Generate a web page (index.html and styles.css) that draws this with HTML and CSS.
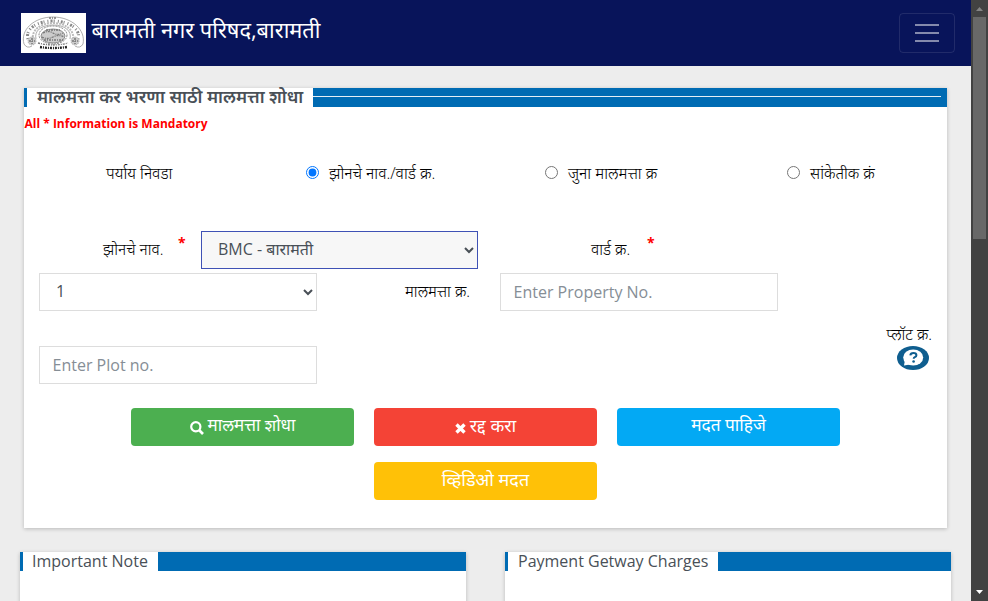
FILE: index.html
```html
<!DOCTYPE html>
<html lang="mr">
<head>
<meta charset="utf-8">
<title>बारामती नगर परिषद</title>
<link rel="stylesheet" href="styles.css">
</head>
<body>
<div class="page">
  <header class="navbar">
    <svg class="logo" viewBox="0 0 65 40">
      <rect width="65" height="40" fill="#fff"/>
      <g fill="none" stroke="#999" stroke-width=".8">
        <path d="M3 31C-1 17 13 4 32 4s33 13 30 27q-3 5-8 2M3 31q3 5 8 2M15 26C13 18 20 12 32 12s19 6 17 14"/>
        <path d="M7 26C4 16 16 8 32 8s28 8 25 18" stroke="#888" stroke-width="3" stroke-dasharray="1 2 2 1 1 3"/>
        <path d="M12 27C10 17 20 10 32 10s22 7 20 17" stroke="#bbb" stroke-width="2" stroke-dasharray="2 1"/>
        <ellipse cx="32" cy="22" rx="14" ry="9" stroke="#666" stroke-dasharray="2 1"/>
        <ellipse cx="32" cy="23" rx="12" ry="7" fill="#ccc" stroke="#777"/>
        <circle cx="11" cy="28" r="4" fill="#ccc" stroke-dasharray="1 1"/>
        <circle cx="54" cy="28" r="4" fill="#ccc" stroke-dasharray="1 1"/>
      </g>
      <g fill="none" stroke="#777" stroke-dasharray="2 1 1 1">
        <path d="M22 20q5-3 10 0t10 0M21 24q5 3 11 0t11 0M23 27h19M25 17h14M17 30q15 4 30 0" stroke-width="1.300"/>
        <path d="M19 34q13 2 27 0" stroke="#222" stroke-width="2.300"/>
        <path d="M28 5h8M11 25v6M54 25v6M8 28h6M51 28h6" stroke-width="1.500"/>
      </g>
    </svg>
    <h1 class="brand">बारामती नगर परिषद,बारामती</h1>
    <button class="toggler" aria-label="Menu"><svg viewBox="0 0 30 30"><path stroke="#fff" stroke-opacity=".5" stroke-width="2" d="M3 7h24M3 15h24M3 23h24"/></svg></button>
  </header>
  <main>
    <section class="card search">
      <div class="strip lined"><h2 class="legend strong">मालमत्ता कर भरणा साठी मालमत्ता शोधा</h2></div>
      <p class="mandatory">All * Information is Mandatory</p>
      <div class="options">
        <span>पर्याय निवडा</span>
        <label><input type="radio" name="by" checked>झोनचे नाव./वार्ड क्र.</label>
        <label><input type="radio" name="by">जुना मालमत्ता क्र</label>
        <label><input type="radio" name="by">सांकेतीक क्रं</label>
      </div>
      <div class="fields first">
        <label class="name">झोनचे नाव.</label><b class="star">*</b>
        <select class="control focused zone"><option>BMC - बारामती</option></select>
        <label class="name ward">वार्ड क्र.</label><b class="star">*</b>
      </div>
      <div class="fields second">
        <select class="control"><option>1</option></select>
        <label class="name">मालमत्ता क्र.</label>
        <input class="control" placeholder="Enter Property No.">
      </div>
      <div class="fields third">
        <input class="control" placeholder="Enter Plot no.">
        <div class="plot"><label class="name">प्लॉट क्र.</label>
          <svg class="help" viewBox="0 0 32 24"><ellipse cx="16" cy="12" rx="16" ry="12" fill="#0f5e8f"/><ellipse cx="16.200" cy="11.500" rx="10" ry="8" fill="#fff"/><path d="M8 14l-1 5.500 6-1z" fill="#fff"/><path d="M13.300 9.400q.3-2.400 3.100-2.400 3 0 3 2.200 0 1.200-1.600 2-1.100.5-1.100 1.500" fill="none" stroke="#0f5e8f" stroke-width="2"/><circle cx="16.600" cy="15.500" r="1.300" fill="#0f5e8f"/></svg>
        </div>
      </div>
      <div class="buttons">
        <button class="btn green"><svg class="glyph find" viewBox="0 0 14 14"><circle cx="5.800" cy="5.800" r="4.600" fill="none" stroke="#fff" stroke-width="2.200"/><path d="M9 9l4 4" stroke="#fff" stroke-width="2.600"/></svg><span>मालमत्ता शोधा</span></button>
        <button class="btn red"><svg class="glyph cross" viewBox="0 0 11 11"><path d="M1.500 1.500l8 8m0-8l-8 8" stroke="#fff" stroke-width="3.400"/></svg><span>रद्द करा</span></button>
        <button class="btn blue"><span>मदत पाहिजे</span></button>
        <button class="btn amber"><span>व्हिडिओ मदत</span></button>
      </div>
    </section>
    <div class="notes">
      <section class="card note"><div class="strip"><h2 class="legend snug">Important Note</h2></div></section>
      <section class="card note"><div class="strip"><h2 class="legend">Payment Getway Charges</h2></div></section>
    </div>
  </main>
</div>
<aside class="scrollbar">
  <svg class="arrow" viewBox="0 0 17 17"><path d="M5 11l3.500-4 3.500 4z" fill="#858585"/></svg>
  <div class="thumb"></div>
  <svg class="arrow end" viewBox="0 0 17 17"><path d="M5 6l3.500 4L12 6z" fill="#fff"/></svg>
</aside>
</body>
</html>
```
FILE: styles.css
```css
* { box-sizing: border-box; }
body { margin: 0; display: flex; width: 988px; height: 601px; overflow: hidden; background: #ededed; font-family: "Open Sans", "Noto Sans", sans-serif; font-size: 16px; color: #000; }
h1, h2, p { margin: 0; font-weight: 400; }
.page { width: 971px; height: 601px; overflow: hidden; }
.navbar { height: 66px; background: #08145a; display: flex; align-items: center; padding: 0 16px 0 21px; }
.logo { width: 65px; height: 40px; }
.brand { font-size: 21.8px; line-height: 30px; color: #fff; margin: -6px auto 0 5.5px; white-space: nowrap; }
.toggler { width: 56px; height: 40px; border: 1px solid rgba(255,255,255,.1); border-radius: 4px; background: none; padding: 0 12px; }
.toggler svg { display: block; width: 30px; height: 30px; }
main { padding: 22px 20px 0; }
.card { background: #fff; box-shadow: 0 1px 4px rgba(0,0,0,.22); }
.search { height: 440px; margin: 0 4px; }
.strip { height: 19px; background: #006bb3; padding-left: 3px; display: flex; }
.legend { height: 19px; line-height: 19px; padding: 0 10px; background: #fff; font-size: 16px; color: #495057; white-space: nowrap; }
.snug { padding-left: 9px; }
.strong { font-size: 17.6px; font-weight: 600; width: 286px; line-height: 16px; }
.lined::after { content: ""; flex: 1; height: 1px; margin: 8px 6px 0 0; background: #e5eef5; }
.mandatory { color: #f00; font-size: 12px; font-weight: 700; line-height: 18px; padding: 8px 0 0 .5px; }
.options { display: grid; grid-template-columns: 200px 239px 242px 1fr; padding-left: 82px; margin-top: 28px; height: 24px; line-height: 24px; font-size: 15.8px; font-weight: 300; white-space: nowrap; }
.options label { display: flex; }
.options input { width: 13px; height: 13px; margin: 5px 10px 0 0; }
.fields { display: flex; white-space: nowrap; }
.first { margin-top: 46px; height: 42px; padding-left: 79px; }
.name { font-size: 15.6px; font-weight: 300; line-height: 36px; width: 60px; }
.name.ward { width: 41px; }
.star { color: #f00; font-size: 14px; line-height: 24px; margin-left: 15px; width: 8px; }
.control { display: block; width: 278px; height: 38px; padding: 6px 12.5px; border: 1px solid #ddd; border-radius: 0; background: #fff; color: #495057; font: inherit; outline: none; }
select.control { padding: 5px 12px 8px; }
.control::placeholder { color: #868e96; opacity: 1; }
.focused { background: #f7f7f7; border-color: #3f51b5; }
.zone { width: 277px; margin: 0 113px 0 15px; }
.second { padding-left: 15px; height: 51px; }
.second .name { width: 183px; text-align: right; padding-right: 30px; }
.third { padding: 0 15px; height: 84px; align-items: flex-start; justify-content: space-between; }
.third > .control { margin-top: 22px; }
.plot { display: flex; flex-direction: column; align-items: flex-end; }
.plot .name { line-height: 20px; height: 22px; width: auto; }
.help { width: 32px; height: 24px; margin-right: 3px; }
.buttons { display: grid; grid-template-columns: repeat(3, 223px); gap: 16px 20px; padding-left: 107px; }
.btn { height: 38px; border: 0; border-radius: 4px; padding: 0 0 4px; color: #fff; font: inherit; font-size: 18px; line-height: 34px; display: flex; align-items: center; justify-content: center; }
.green { background: #4caf50; font-size: 17px; }
.red { background: #f44336; }
.blue { background: #03a9f4; font-size: 17.3px; }
.amber { background: #ffc107; grid-column: 2; }
.glyph { margin: 6px 4px 0 0; }
.find { width: 14px; height: 14px; }
.cross { width: 11px; height: 11px; }
.notes { display: flex; gap: 39px; margin-top: 24px; }
.note { width: 446px; height: 100px; }
.scrollbar { width: 17px; height: 601px; background: #424242; display: flex; flex-direction: column; }
.arrow { width: 17px; height: 17px; }
.thumb { width: 13px; height: 222px; margin-left: 2px; background: #686868; }
.end { margin-top: auto; }
```
